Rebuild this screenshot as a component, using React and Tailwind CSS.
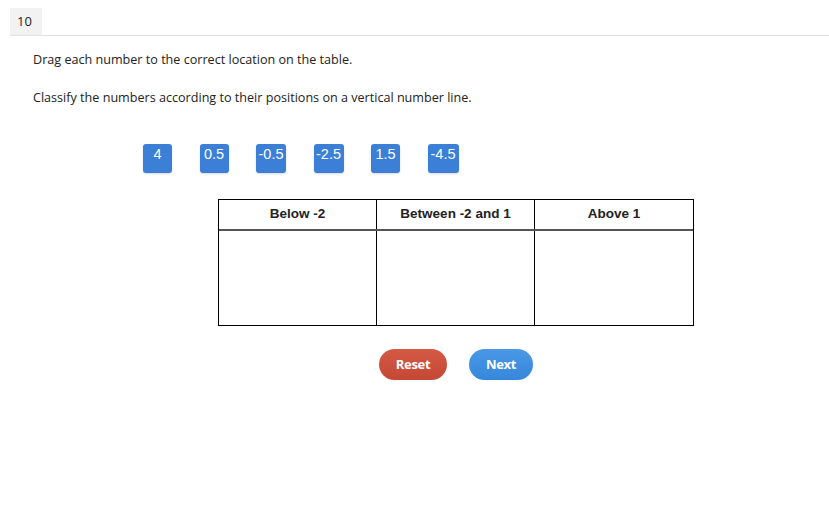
import React from "react"

const tiles = [
  { label: "4", w: "w-[29px]" },
  { label: "0.5", w: "w-[29px]" },
  { label: "-0.5", w: "w-[30px]" },
  { label: "-2.5", w: "w-[30px]" },
  { label: "1.5", w: "w-[29px]" },
  { label: "-4.5", w: "w-[31px]" },
]

const columns = ["Below -2", "Between -2 and 1", "Above 1"]

export default function App() {
  return (
    <div className="w-[829px] h-[528px] bg-white overflow-hidden font-['Open_Sans',sans-serif] text-[#222]">
      <div className="ml-[10px] mt-[8px] border-b border-[#e2e2e2] flex">
        <div className="w-[32px] h-[27px] bg-[#f2f2f2] flex items-center pl-[7px] text-[13px]">10</div>
      </div>

      <div className="pl-[33px] text-[12.6px]">
        <p className="mt-[15px] leading-[18px]">Drag each number to the correct location on the table.</p>
        <p className="mt-[20px] leading-[18px]">Classify the numbers according to their positions on a vertical number line.</p>
      </div>

      <div className="flex pl-[143px] mt-[37px] gap-[27.5px]">
        {tiles.map((t, i) => (
          <div
            key={i}
            className={`${t.w} h-[29px] rounded-[3px] bg-[#3b80d6] text-white text-[14.5px] font-['Liberation_Sans',Arial,sans-serif] flex justify-center pt-[1px] leading-[18px] shadow-[0_1px_2px_rgba(0,0,0,0.15)]`}
          >
            {t.label}
          </div>
        ))}
      </div>

      <div className="ml-[218px] mt-[26px] w-[476px] border border-black font-['Liberation_Sans',Arial,sans-serif]">
        <div className="grid grid-cols-3 h-[31px] border-b-2 border-[#555]">
          {columns.map((c, i) => (
            <div
              key={c}
              className={`flex items-center justify-center text-[13.5px] font-bold text-[#222] ${i < 2 ? "border-r border-black" : ""}`}
            >
              {c}
            </div>
          ))}
        </div>
        <div className="grid grid-cols-3 h-[94px]">
          {columns.map((c, i) => (
            <div key={c} className={i < 2 ? "border-r border-black" : ""}></div>
          ))}
        </div>
      </div>

      <div className="flex ml-[379px] mt-[23px] gap-[22px]">
        <button className="w-[68px] h-[31px] rounded-full bg-gradient-to-b from-[#d45a45] to-[#c44835] text-white text-[13px] font-bold tracking-[-0.3px]">
          Reset
        </button>
        <button className="w-[64px] h-[31px] rounded-full bg-gradient-to-b from-[#4a98e6] to-[#3687db] text-white text-[13px] font-bold tracking-[-0.3px]">
          Next
        </button>
      </div>
    </div>
  )
}
